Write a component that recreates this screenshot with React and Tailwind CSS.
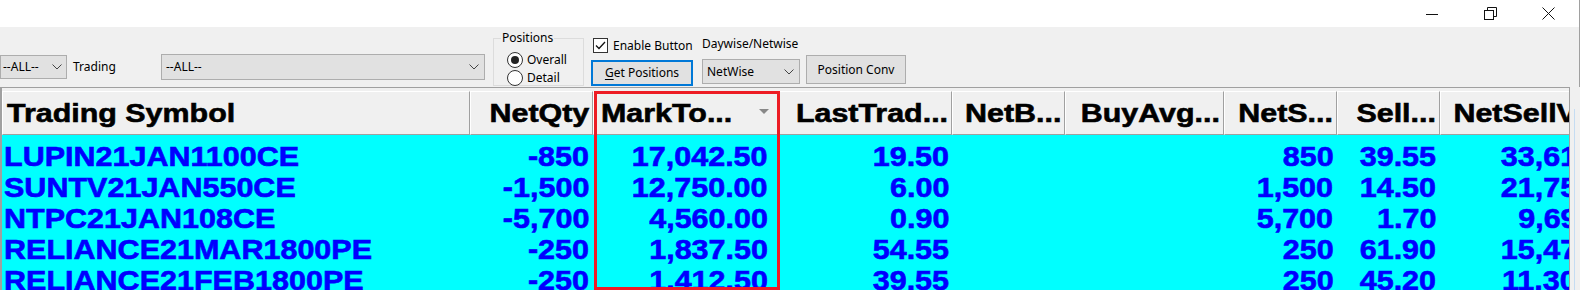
import React from 'react';

const UI = { fontFamily: '"Noto Sans", "Open Sans", sans-serif' };
const GRID = { fontFamily: '"Liberation Sans", Arial, sans-serif' };

const cols = [
  { w: 'w-[468px]', label: 'Trading Symbol', left: true, dpr: '' },
  { w: 'w-[123px]', label: 'NetQty', dpr: 'pr-[3.5px]' },
  { w: 'w-[185px]', label: 'MarkTo...', sort: true, dpr: 'pr-[10px]' },
  { w: 'w-[174px]', label: 'LastTrad...', dpr: 'pr-[3px]' },
  { w: 'w-[113px]', label: 'NetB...', dpr: 'pr-[3.5px]' },
  { w: 'w-[159px]', label: 'BuyAvg...', dpr: 'pr-[3.5px]' },
  { w: 'w-[113px]', label: 'NetS...', dpr: 'pr-[3.5px]' },
  { w: 'w-[103px]', label: 'Sell...', dpr: 'pr-[3.5px]' },
  { w: 'w-[200px]', label: 'NetSellValue', dpr: 'pr-[3.5px]' },
];

const rows = [
  ['LUPIN21JAN1100CE', '-850', '17,042.50', '19.50', '', '', '850', '39.55', '33,617.50'],
  ['SUNTV21JAN550CE', '-1,500', '12,750.00', '6.00', '', '', '1,500', '14.50', '21,750.00'],
  ['NTPC21JAN108CE', '-5,700', '4,560.00', '0.90', '', '', '5,700', '1.70', '9,690.00'],
  ['RELIANCE21MAR1800PE', '-250', '1,837.50', '54.55', '', '', '250', '61.90', '15,475.00'],
  ['RELIANCE21FEB1800PE', '-250', '1,412.50', '39.55', '', '', '250', '45.20', '11,300.00'],
];

const Chevron = () => (
  <svg width="10" height="6" viewBox="0 0 10 6">
    <path d="M0.5 0.5 L5 5 L9.5 0.5" fill="none" stroke="#444" strokeWidth="1" />
  </svg>
);

const Combo = ({ text, className, pr }) => (
  <div className={`flex items-center justify-between border border-[#adadad] bg-[#e1e1e1] text-[12px] text-black ${className}`}>
    <span className="pl-[2px]">{text}</span>
    <span className={pr}>
      <Chevron />
    </span>
  </div>
);

const Radio = ({ checked, label }) => (
  <div className="flex h-[18px] items-center gap-[4px]">
    <span className="flex h-[16px] w-[16px] items-center justify-center rounded-full border border-[#333] bg-white">
      {checked && <span className="h-[8px] w-[8px] rounded-full bg-[#222]" />}
    </span>
    <span>{label}</span>
  </div>
);

const Toolbar = () => (
  <div className="flex h-[60px] items-start border-r border-[#a0a0a0] bg-[#f0f0f0] text-[12px] text-black" style={UI}>
    <Combo text="--ALL--" className="mt-[28px] h-[24px] w-[67px]" pr="pr-[4px]" />
    <div className="ml-[6px] mt-[28px] flex h-[24px] w-[88px] items-center">Trading</div>
    <Combo text="--ALL--" className="mt-[27px] h-[26px] w-[324px] pl-[2px]" pr="pr-[5px]" />

    <div className="relative ml-[8px] mt-[11px] h-[48px] w-[91px] border border-[#dcdcdc] pl-[13px] pt-[12px]">
      <span className="absolute -top-[10px] left-[7px] bg-[#f0f0f0] px-[1px] leading-[17px]">Positions</span>
      <Radio checked label="Overall" />
      <Radio label="Detail" />
    </div>

    <div className="ml-[7px] flex w-[102px] flex-col">
      <div className="ml-[2px] mt-[11px] flex h-[15px] items-center gap-[5px] whitespace-nowrap">
        <span className="flex h-[15px] w-[15px] items-center justify-center border border-[#333] bg-white">
          <svg width="11" height="9" viewBox="0 0 11 9">
            <path d="M1 4.5 L4 7.5 L10 1" fill="none" stroke="#111" strokeWidth="1.3" />
          </svg>
        </span>
        <span>Enable Button</span>
      </div>
      <div className="mt-[7px] flex h-[26px] items-center justify-center border-2 border-[#0078d7] bg-[#e1e1e1]">
        <span>
          <span className="underline underline-offset-2">G</span>et Positions
        </span>
      </div>
    </div>

    <div className="ml-[9px] flex w-[98px] flex-col">
      <div className="mt-[8px] h-[17px] whitespace-nowrap leading-[17px]">Daywise/Netwise</div>
      <Combo text="NetWise" className="mt-[7px] h-[25px] w-[98px] pl-[2px]" pr="pr-[5px]" />
    </div>

    <div className="ml-[6px] mt-[28px] flex h-[29px] w-[100px] items-center justify-center border border-[#adadad] bg-[#e1e1e1]">
      Position Conv
    </div>
  </div>
);

const TitleBar = () => (
  <div className="flex h-[27px] items-center justify-end border-r border-[#a0a0a0] bg-white pr-[2px]">
    <div className="flex w-[58px] justify-center">
      <svg width="12" height="12" viewBox="0 0 12 12">
        <path d="M0 6.5 H12" stroke="#111" strokeWidth="1" />
      </svg>
    </div>
    <div className="flex w-[58px] justify-center">
      <svg width="13" height="13" viewBox="0 0 13 13">
        <path d="M3.5 3 V0.5 H12.5 V9.5 H10" fill="none" stroke="#111" strokeWidth="1" />
        <rect x="0.5" y="3.5" width="9" height="9" fill="none" stroke="#111" strokeWidth="1" />
      </svg>
    </div>
    <div className="flex w-[58px] justify-center">
      <svg width="13" height="13" viewBox="0 0 13 13">
        <path d="M0.5 0.5 L12.5 12.5 M12.5 0.5 L0.5 12.5" stroke="#111" strokeWidth="1" />
      </svg>
    </div>
  </div>
);

const Grid = () => (
  <div className="flex h-[203px]">
    <div className="w-[1570px] overflow-hidden border-l-2 border-r border-t border-[#a0a0a0]" style={GRID}>
      <div className="flex h-[47px] bg-[#f0f0f0] pt-[3px]">
        {cols.map((c) => (
          <div
            key={c.label}
            className={`flex h-[44px] shrink-0 items-center overflow-hidden whitespace-nowrap border-b border-l border-r border-t border-b-[#a0a0a0] border-l-white border-r-[#a0a0a0] border-t-white text-[26px] font-bold leading-[42px] text-black ${c.w} ${
              c.left ? 'justify-start pl-[4px]' : c.sort ? 'justify-between pl-[7px] pr-[8px]' : 'justify-end pr-[3px]'
            }`}
          >
            <span
              className={`inline-block scale-x-[1.17] [-webkit-text-stroke:0.6px_#000] ${
                c.left || c.sort ? 'origin-left' : 'origin-right'
              }`}
            >
              {c.label}
            </span>
            {c.sort && (
              <svg width="10" height="5" viewBox="0 0 10 5" className="mb-[4px]">
                <path d="M0 0 H10 L5 5 Z" fill="#888" />
              </svg>
            )}
          </div>
        ))}
      </div>
      {rows.map((r, i) => (
        <div key={i} className="flex h-[31px] bg-[#00ffff]">
          {r.map((v, j) => (
            <div
              key={j}
              className={`h-[31px] shrink-0 whitespace-nowrap text-[28px] font-bold leading-[43px] text-[#0000ff] ${cols[j].w} ${
                j === 0 ? 'pl-[2px] text-left' : `text-right ${cols[j].dpr}`
              }`}
            >
              <span
                className={`inline-block scale-x-[1.09] [-webkit-text-stroke:0.6px_#0000ff] ${
                  j === 0 ? 'origin-left' : 'origin-right'
                }`}
              >
                {v}
              </span>
            </div>
          ))}
        </div>
      ))}
    </div>
    <div className="flex w-[10px] bg-[#f0f0f0] pl-[4px] pt-[22px]">
      <div className="h-full w-[1px] bg-[#c5dcf2]" />
    </div>
  </div>
);

export default function App() {
  return (
    <div className="relative h-[290px] w-[1580px] overflow-hidden bg-[#f0f0f0]">
      <TitleBar />
      <Toolbar />
      <Grid />
      <div className="pointer-events-none absolute left-[594px] top-[91px] h-[199px] w-[186px] border-[3px] border-[#ed1c24]" />
    </div>
  );
}
